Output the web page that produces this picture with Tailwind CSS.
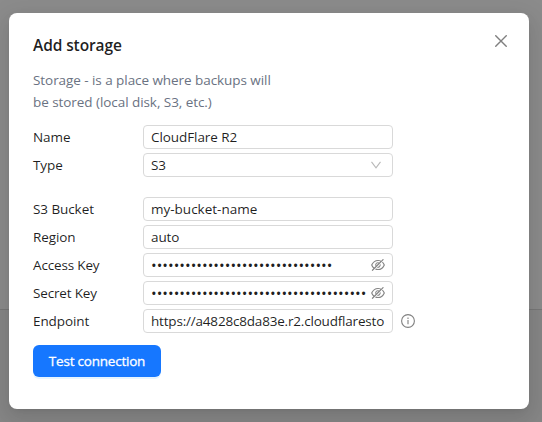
<!DOCTYPE html>
<html lang="en">
<head>
<meta charset="utf-8">
<title>Add storage</title>
<script src="https://cdn.jsdelivr.net/npm/@tailwindcss/browser@4"></script>
</head>
<body class="relative h-[422px] w-[542px] overflow-hidden bg-[#8b8b8b] font-['Open_Sans','Noto_Sans',sans-serif] text-[13.5px] tracking-[-0.08px] text-black/88">
  <div class="absolute inset-x-0 top-[309px] bottom-0 border-t border-[#777] bg-[#868686]"></div>
  <main class="relative mt-[13px] ml-[9px] h-[396px] w-[520px] rounded-lg bg-white px-6 pt-5 shadow-[0_6px_16px_0_rgba(0,0,0,0.08),0_3px_6px_-4px_rgba(0,0,0,0.12),0_9px_28px_8px_rgba(0,0,0,0.05)]">
    <button class="absolute top-[17px] right-[17px] flex size-[22px] items-center justify-center text-black/50" aria-label="Close">
      <svg class="size-3" viewBox="0 0 12 12" fill="none" stroke="currentColor" stroke-width="1.4"><path d="M.3.3 11.7 11.7M11.7.3.3 11.7"/></svg>
    </button>
    <h1 class="h-6 text-[15.5px] leading-[25px] font-semibold tracking-[-0.1px] whitespace-nowrap">Add storage</h1>
    <p class="mt-3 h-11 leading-[22px] tracking-[-0.06px] whitespace-nowrap text-[#6a7282]">Storage - is a place where backups will<br>be stored (local disk, S3, etc.)</p>

    <div class="mt-3 flex flex-col gap-1">
      <div class="flex h-6 items-center"><span class="w-[110px]">Name</span><div class="flex h-6 w-[250px] items-center rounded border border-[#d9d9d9] px-[7px]"><span>CloudFlare R2</span></div></div>
      <div class="flex h-6 items-center"><span class="w-[110px]">Type</span><div class="flex h-6 w-[250px] items-center justify-between rounded border border-[#d9d9d9] pr-[11px] pl-[7px]"><span>S3</span>
        <svg class="size-[10px]" viewBox="0 0 10 10" fill="none" stroke="#b8b8b8" stroke-width="1.1"><path d="m.5 1.8 4.5 6 4.5-6"/></svg></div></div>
    </div>
    <div class="mt-5 flex flex-col gap-1">
      <div class="flex h-6 items-center"><span class="w-[110px]">S3 Bucket</span><div class="flex h-6 w-[250px] items-center rounded border border-[#d9d9d9] px-[7px]"><span class="tracking-normal">my-bucket-name</span></div></div>
      <div class="flex h-6 items-center"><span class="w-[110px]">Region</span><div class="flex h-6 w-[250px] items-center rounded border border-[#d9d9d9] px-[7px]"><span>auto</span></div></div>
      <div class="flex h-6 items-center"><span class="w-[110px] tracking-[-0.16px]">Access Key</span><div class="flex h-6 w-[250px] items-center justify-between rounded border border-[#d9d9d9] px-[7px]"><span class="w-[218px] overflow-hidden text-[15px] leading-[22px] tracking-[0.03px] whitespace-nowrap">••••••••••••••••••••••••••••••••</span>
        <svg class="size-[14px]" viewBox="64 64 896 896" fill="#848484"><path d="M942.2 486.2Q889.47 375.11 816.7 305l-50.88 50.88C807.31 395.53 843.45 447.4 874.7 512 791.5 684.2 673.4 766 512 766q-72.67 0-133.87-22.38L323 798.75Q408 838 512 838q288.3 0 430.2-300.3a60.29 60.29 0 000-51.5zm-63.57-320.64L836 122.88a8 8 0 00-11.32 0L715.31 232.2Q624.86 186 512 186q-288.3 0-430.2 300.3a60.3 60.3 0 000 51.5q56.69 119.4 136.5 191.41L112.48 835a8 8 0 000 11.31L155.17 889a8 8 0 0011.31 0l712.15-712.12a8 8 0 000-11.32zM149.3 512C232.6 339.8 350.7 258 512 258c54.54 0 104.13 9.36 149.12 28.39l-70.3 70.3a176 176 0 00-238.13 238.13l-83.42 83.42C223.1 637.49 183.3 582.28 149.3 512zm246.7 0a112.11 112.11 0 01146.2-106.69L401.31 546.2A112 112 0 01396 512z"/><path d="M508 624c-3.46 0-6.87-.16-10.25-.47l-52.82 52.82a176.09 176.09 0 00227.42-227.42l-52.82 52.82c.31 3.38.47 6.79.47 10.25a111.94 111.94 0 01-112 112z"/></svg></div></div>
      <div class="flex h-6 items-center"><span class="w-[110px] tracking-[-0.16px]">Secret Key</span><div class="flex h-6 w-[250px] items-center justify-between rounded border border-[#d9d9d9] px-[7px]"><span class="w-[218px] overflow-hidden text-[15px] leading-[22px] tracking-[0.03px] whitespace-nowrap">••••••••••••••••••••••••••••••••••••••</span>
        <svg class="size-[14px]" viewBox="64 64 896 896" fill="#848484"><path d="M942.2 486.2Q889.47 375.11 816.7 305l-50.88 50.88C807.31 395.53 843.45 447.4 874.7 512 791.5 684.2 673.4 766 512 766q-72.67 0-133.87-22.38L323 798.75Q408 838 512 838q288.3 0 430.2-300.3a60.29 60.29 0 000-51.5zm-63.57-320.64L836 122.88a8 8 0 00-11.32 0L715.31 232.2Q624.86 186 512 186q-288.3 0-430.2 300.3a60.3 60.3 0 000 51.5q56.69 119.4 136.5 191.41L112.48 835a8 8 0 000 11.31L155.17 889a8 8 0 0011.31 0l712.15-712.12a8 8 0 000-11.32zM149.3 512C232.6 339.8 350.7 258 512 258c54.54 0 104.13 9.36 149.12 28.39l-70.3 70.3a176 176 0 00-238.13 238.13l-83.42 83.42C223.1 637.49 183.3 582.28 149.3 512zm246.7 0a112.11 112.11 0 01146.2-106.69L401.31 546.2A112 112 0 01396 512z"/><path d="M508 624c-3.46 0-6.87-.16-10.25-.47l-52.82 52.82a176.09 176.09 0 00227.42-227.42l-52.82 52.82c.31 3.38.47 6.79.47 10.25a111.94 111.94 0 01-112 112z"/></svg></div></div>
      <div class="flex h-6 items-center"><span class="w-[110px]">Endpoint</span><div class="flex h-6 w-[250px] items-center rounded border border-[#d9d9d9] px-[7px]"><span class="tracking-[-0.19px] whitespace-nowrap">https://a4828c8da83e.r2.cloudflaresto</span></div>
        <svg class="ml-2 size-[14px]" viewBox="0 0 14 14" fill="none" stroke="#808080"><circle cx="7" cy="7" r="6.4" stroke-width="1.1"/><path d="M7 6v4.3M7 3.6v1.3" stroke-width="1.1"/></svg></div>
    </div>
    <button class="mt-3 h-8 w-32 rounded-md bg-[#1677ff] font-medium tracking-[-0.22px] whitespace-nowrap text-white shadow-[0_2px_0_rgba(5,145,255,0.1)] [-webkit-text-stroke:0.3px_white]">Test connection</button>
  </main>
</body>
</html>
